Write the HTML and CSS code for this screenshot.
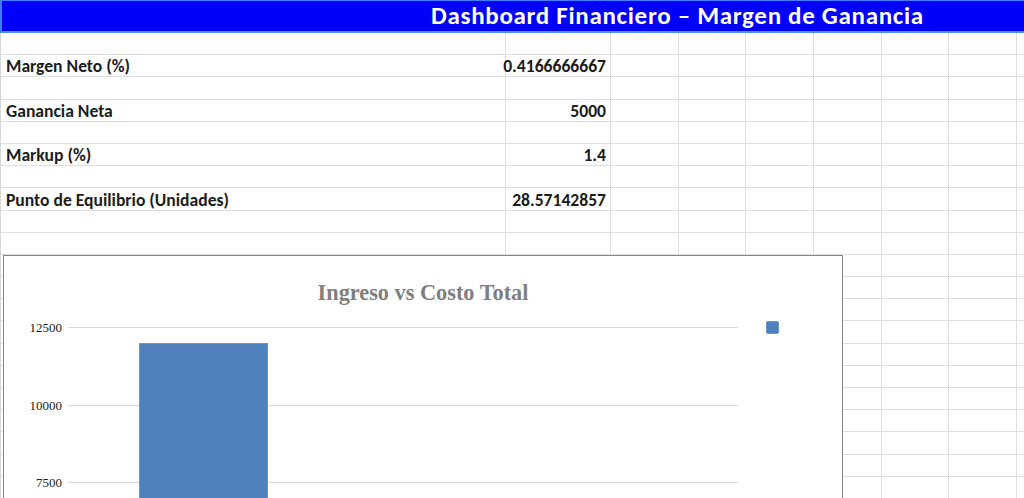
FILE: index.html
```html
<!DOCTYPE html>
<html lang="es">
<head>
<meta charset="utf-8">
<title>Dashboard Financiero</title>
<link rel="stylesheet" href="styles.css">
</head>
<body>
<div class="sheet">
  <div class="header"><span class="header-title">Dashboard Financiero – Margen de Ganancia</span></div>
  <div class="row"><div class="c a"></div><div class="c b"></div><div class="rest"></div></div>
  <div class="row"><div class="c a lbl">Margen Neto (%)</div><div class="c b val">0.4166666667</div><div class="rest"></div></div>
  <div class="row"><div class="c a"></div><div class="c b"></div><div class="rest"></div></div>
  <div class="row"><div class="c a lbl">Ganancia Neta</div><div class="c b val">5000</div><div class="rest"></div></div>
  <div class="row"><div class="c a"></div><div class="c b"></div><div class="rest"></div></div>
  <div class="row"><div class="c a lbl">Markup (%)</div><div class="c b val">1.4</div><div class="rest"></div></div>
  <div class="row"><div class="c a"></div><div class="c b"></div><div class="rest"></div></div>
  <div class="row"><div class="c a lbl">Punto de Equilibrio (Unidades)</div><div class="c b val">28.57142857</div><div class="rest"></div></div>
  <div class="row"><div class="c a"></div><div class="c b"></div><div class="rest"></div></div>
  <div class="row"><div class="c a"></div><div class="c b"></div><div class="rest"></div></div>
  <div class="row"><div class="c a"></div><div class="c b"></div><div class="rest"></div></div>
  <div class="row"><div class="c a"></div><div class="c b"></div><div class="rest"></div></div>
  <div class="row"><div class="c a"></div><div class="c b"></div><div class="rest"></div></div>
  <div class="row"><div class="c a"></div><div class="c b"></div><div class="rest"></div></div>
  <div class="row"><div class="c a"></div><div class="c b"></div><div class="rest"></div></div>
  <div class="row"><div class="c a"></div><div class="c b"></div><div class="rest"></div></div>
  <div class="row"><div class="c a"></div><div class="c b"></div><div class="rest"></div></div>
  <div class="row"><div class="c a"></div><div class="c b"></div><div class="rest"></div></div>
  <div class="row"><div class="c a"></div><div class="c b"></div><div class="rest"></div></div>
  <div class="row"><div class="c a"></div><div class="c b"></div><div class="rest"></div></div>
  <div class="row"><div class="c a"></div><div class="c b"></div><div class="rest"></div></div>

  <div class="chart">
    <div class="chart-title">Ingreso vs Costo Total</div>
    <div class="chart-body">
      <div class="plot">
        <div class="tick"><span class="tick-label">12500</span></div>
        <div class="tick"><span class="tick-label">10000</span></div>
        <div class="tick"><span class="tick-label">7500</span></div>
        <div class="bar" style="top: 15.5px;"></div>
      </div>
      <div class="legend"><span class="legend-key"></span></div>
    </div>
  </div>
</div>
</body>
</html>
```
FILE: styles.css
```css
html, body {
  margin: 0;
  padding: 0;
  background: #ffffff;
}
body {
  width: 1024px;
  height: 498px;
  overflow: hidden;
  font-family: Carlito, Calibri, Lato, "Liberation Sans", sans-serif;
}
.sheet {
  position: relative;
  width: 1024px;
  height: 498px;
  overflow: hidden;
}
.header {
  box-sizing: border-box;
  height: 33px;
  background: #0000fb;
  border-top: 1px solid #3f7dff;
  border-left: 2px solid #3f7dff;
  border-bottom: 2px solid #4a90ff;
  display: flex;
  align-items: flex-end;
  padding-left: 429px;
}
.header-title {
  color: #ffffff;
  font-weight: 700;
  font-size: 25px;
  letter-spacing: 0.7px;
  line-height: 28px;
  padding-bottom: 1px;
  white-space: nowrap;
}
.row {
  box-sizing: border-box;
  height: 22.2px;
  display: flex;
  border-left: 1px solid #d6d6d6;
}
.c {
  box-sizing: border-box;
  height: 100%;
  border-right: 1px solid #dedede;
  border-bottom: 1px solid #dedede;
  display: flex;
  align-items: flex-end;
  font-weight: 700;
  font-size: 17.6px;
  line-height: 20px;
  color: #1c1c1c;
  white-space: nowrap;
}
.a {
  width: 505px;
  padding-left: 5px;
  padding-bottom: 0;
}
.b {
  width: 105px;
  justify-content: flex-end;
  padding-right: 4px;
  padding-bottom: 0;
}
.rest {
  flex: 1;
  height: 100%;
  box-sizing: border-box;
  border-bottom: 1px solid #dedede;
  background-image: repeating-linear-gradient(to right, transparent 0, transparent 66.7px, #dedede 66.7px, #dedede 67.7px);
}
.chart {
  position: absolute;
  left: 3px;
  top: 255px;
  width: 840px;
  height: 260px;
  box-sizing: border-box;
  border: 1px solid #858585;
  background: #ffffff;
  font-family: "Liberation Serif", "Times New Roman", serif;
}
.chart-title {
  padding-top: 24px;
  text-align: center;
  font-size: 22.3px;
  line-height: 25px;
  font-weight: 700;
  color: #7f7f7f;
}
.chart-body {
  display: flex;
  margin-top: 22px;
}
.plot {
  position: relative;
  margin-left: 64px;
  width: 670px;
  display: flex;
  flex-direction: column;
}
.tick {
  position: relative;
  height: 77.7px;
  box-sizing: border-box;
  border-top: 1px solid #d9d9d9;
}
.tick-label {
  position: absolute;
  right: 100%;
  margin-right: 6px;
  top: -8px;
  font-size: 13px;
  line-height: 15px;
  color: #222222;
}
.bar {
  position: absolute;
  left: 71px;
  width: 129px;
  bottom: 0;
  background: #4f81bd;
  box-sizing: border-box;
  border: 1px solid #6a95c9;
  border-bottom: none;
}
.legend {
  margin-left: 28px;
  margin-top: -6px;
}
.legend-key {
  display: block;
  width: 13px;
  height: 13px;
  box-sizing: border-box;
  background: #4f81bd;
  border: 1px solid #6a95c9;
  border-radius: 2px;
}
```
